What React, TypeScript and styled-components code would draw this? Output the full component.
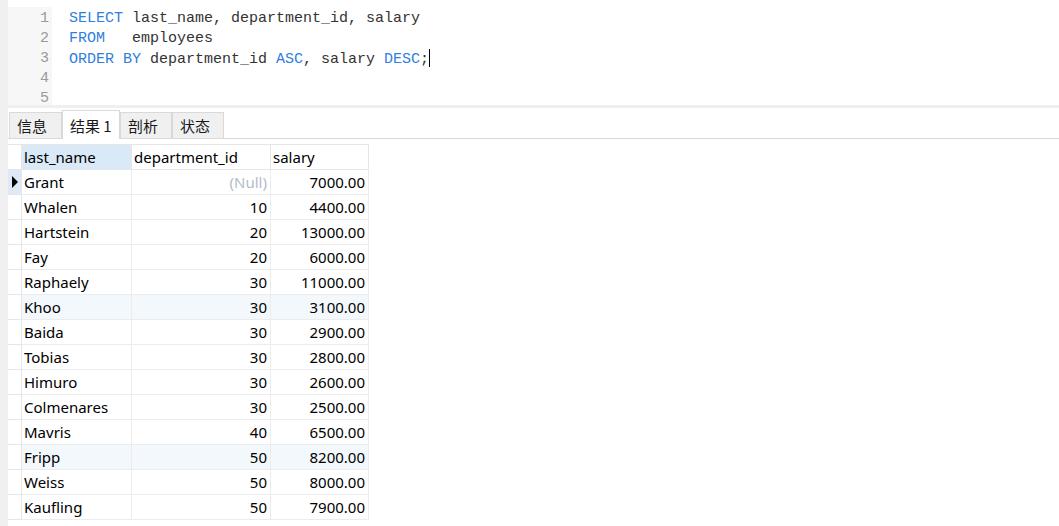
import styled, { createGlobalStyle } from 'styled-components';

const GlobalStyle = createGlobalStyle`
    html, body {
        margin: 0;
        padding: 0;
        background: #ffffff;
    }
    body {
        width: 1059px;
        height: 526px;
        overflow: hidden;
        font-family: 'Noto Sans', 'Noto Sans CJK SC', sans-serif;
    }
`;

interface Row {
    name: string;
    dept: number | null;
    salary: string;
}

const rows: Row[] = [
    { name: 'Grant', dept: null, salary: '7000.00' },
    { name: 'Whalen', dept: 10, salary: '4400.00' },
    { name: 'Hartstein', dept: 20, salary: '13000.00' },
    { name: 'Fay', dept: 20, salary: '6000.00' },
    { name: 'Raphaely', dept: 30, salary: '11000.00' },
    { name: 'Khoo', dept: 30, salary: '3100.00' },
    { name: 'Baida', dept: 30, salary: '2900.00' },
    { name: 'Tobias', dept: 30, salary: '2800.00' },
    { name: 'Himuro', dept: 30, salary: '2600.00' },
    { name: 'Colmenares', dept: 30, salary: '2500.00' },
    { name: 'Mavris', dept: 40, salary: '6500.00' },
    { name: 'Fripp', dept: 50, salary: '8200.00' },
    { name: 'Weiss', dept: 50, salary: '8000.00' },
    { name: 'Kaufling', dept: 50, salary: '7900.00' },
];

const tabs = ['信息', '结果 1', '剖析', '状态'];

const App = () => {
    return (
        <Page>
            <GlobalStyle />
            <LeftStrip />
            <Main>
                <Editor>
                    <Gutter>
                        {[1, 2, 3, 4, 5].map((n) => (
                            <LineNo key={n}>{n}</LineNo>
                        ))}
                    </Gutter>
                    <Code>
                        <Line>
                            <Kw>SELECT</Kw> last_name, department_id, salary
                        </Line>
                        <Line>
                            <Kw>FROM</Kw>{'   '}employees
                        </Line>
                        <Line>
                            <Kw>ORDER BY</Kw> department_id <Kw>ASC</Kw>, salary <Kw>DESC</Kw>;<Caret />
                        </Line>
                        <Line />
                        <Line />
                    </Code>
                </Editor>
                <Separator />
                <TabBar>
                    {tabs.map((t, i) => (
                        <Tab key={t} $active={i === 1} $width={[53, 58, 52, 52][i]}>
                            {t}
                        </Tab>
                    ))}
                </TabBar>
                <GridWrap>
                    <Grid>
                        <thead>
                            <tr>
                                <IndicatorCell />
                                <HeadCell $w={110} $selected>
                                    last_name
                                </HeadCell>
                                <HeadCell $w={139}>department_id</HeadCell>
                                <HeadCell $w={98}>salary</HeadCell>
                            </tr>
                        </thead>
                        <tbody>
                            {rows.map((r, i) => (
                                <BodyRow key={r.name} $tinted={i === 5 || i === 11}>
                                    <IndicatorCell $current={i === 0}>
                                        {i === 0 && <Arrow />}
                                    </IndicatorCell>
                                    <Cell>{r.name}</Cell>
                                    <Cell $right>{r.dept === null ? <NullText>(Null)</NullText> : r.dept}</Cell>
                                    <Cell $right>{r.salary}</Cell>
                                </BodyRow>
                            ))}
                        </tbody>
                    </Grid>
                </GridWrap>
            </Main>
        </Page>
    );
};

export default App;

const Page = styled.div`
    display: flex;
    width: 1059px;
    height: 526px;
    background: #ffffff;
`;

const LeftStrip = styled.div`
    width: 8px;
    flex-shrink: 0;
    background: #f0f0f0;
`;

const Main = styled.div`
    flex: 1;
    display: flex;
    flex-direction: column;
    padding-top: 7px;
`;

const Editor = styled.div`
    display: flex;
    height: 98px;
`;

const Gutter = styled.div`
    width: 44px;
    background: #f7f7f7;
    display: flex;
    flex-direction: column;
    align-items: flex-end;
    padding: 2px 3px 0 0;
    box-sizing: border-box;
`;

const LineNo = styled.div`
    height: 20px;
    line-height: 20px;
    font-family: 'Liberation Mono', monospace;
    font-size: 15px;
    color: #9a9a9a;
`;

const Code = styled.div`
    flex: 1;
    padding: 2px 0 0 17px;
`;

const Line = styled.div`
    height: 20px;
    line-height: 20px;
    font-family: 'Liberation Mono', monospace;
    font-size: 15px;
    color: #333333;
    white-space: pre;
`;

const Kw = styled.span`
    color: #2f7ee0;
`;

const Caret = styled.span`
    display: inline-block;
    width: 1px;
    height: 18px;
    background: #000000;
    vertical-align: -4px;
`;

const Separator = styled.div`
    height: 3px;
    background: #efefef;
    margin-bottom: 2px;
`;

const TabBar = styled.div`
    display: flex;
    align-items: flex-end;
    height: 28px;
    padding-left: 1px;
    border-bottom: 1px solid #d9d9d9;
    box-sizing: content-box;
`;

const Tab = styled.div<{ $active?: boolean; $width: number }>`
    width: ${(p) => p.$width}px;
    height: ${(p) => (p.$active ? 29 : 26)}px;
    box-sizing: border-box;
    padding-left: 7px;
    display: flex;
    align-items: center;
    font-family: 'Noto Sans CJK SC', 'Noto Sans', sans-serif;
    font-size: 15px;
    color: #1a1a1a;
    background: ${(p) => (p.$active ? '#ffffff' : '#f0f0f0')};
    border: 1px solid #d9d9d9;
    border-bottom: none;
    margin-bottom: ${(p) => (p.$active ? -1 : 0)}px;
    position: relative;
    z-index: ${(p) => (p.$active ? 1 : 0)};
`;

const GridWrap = styled.div`
    padding-top: 5px;
`;

const Grid = styled.table`
    border-collapse: collapse;
    font-family: 'Noto Sans', sans-serif;
    font-size: 15px;
    color: #000000;
`;

const IndicatorCell = styled.td<{ $current?: boolean }>`
    width: 13px;
    min-width: 13px;
    height: 24px;
    padding: 0;
    border: 1px solid #e6e6e6;
    border-left: none;
    background: ${(p) => (p.$current ? '#dde9f6' : '#ffffff')};
    position: relative;
`;

const Arrow = styled.span`
    position: absolute;
    left: 4px;
    top: 6px;
    width: 0;
    height: 0;
    border-top: 6px solid transparent;
    border-bottom: 6px solid transparent;
    border-left: 6px solid #000000;
`;

const HeadCell = styled.th<{ $w: number; $selected?: boolean }>`
    width: ${(p) => p.$w}px;
    min-width: ${(p) => p.$w}px;
    max-width: ${(p) => p.$w}px;
    height: 24px;
    padding: 0 0 0 2px;
    box-sizing: border-box;
    text-align: left;
    font-weight: normal;
    border: 1px solid #e6e6e6;
    background: ${(p) => (p.$selected ? '#dae9f7' : '#ffffff')};
    white-space: nowrap;
`;

const BodyRow = styled.tr<{ $tinted?: boolean }>`
    background: ${(p) => (p.$tinted ? '#f3f8fc' : '#ffffff')};
`;

const Cell = styled.td<{ $right?: boolean }>`
    height: 24px;
    padding: ${(p) => (p.$right ? '0 3px 0 0' : '0 0 0 2px')};
    text-align: ${(p) => (p.$right ? 'right' : 'left')};
    border: 1px solid #ececec;
    white-space: nowrap;
`;

const NullText = styled.span`
    color: #b4bccb;
`;
